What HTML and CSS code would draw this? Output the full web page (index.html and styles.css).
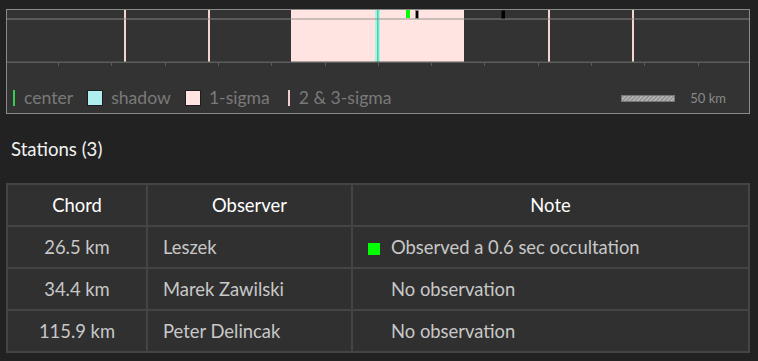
FILE: index.html
```html
<!DOCTYPE html>
<html>
<head>
<meta charset="utf-8">
<link rel="stylesheet" href="styles.css">
</head>
<body>
<div class="page">
  <div class="chart">
    <svg class="plot" width="742" height="58" viewBox="0 0 742 58">
      <defs>
        <pattern id="hatch" width="3" height="3" patternUnits="userSpaceOnUse" patternTransform="rotate(45)">
          <rect width="3" height="3" fill="#8a8a8a"/>
          <rect width="1.5" height="3" fill="#bdbdbd"/>
        </pattern>
      </defs>
      <rect x="284" y="0" width="173" height="52" fill="#ffe4e1"/>
      <rect x="368" y="0" width="5" height="52" fill="#afeeee"/>
      <rect x="370" y="0" width="1.5" height="52" fill="#3fd98f"/>
      <rect x="117" y="0" width="2" height="52" fill="#f3d4d1"/>
      <rect x="201" y="0" width="2" height="52" fill="#f3d4d1"/>
      <rect x="541" y="0" width="2" height="52" fill="#f3d4d1"/>
      <rect x="625" y="0" width="2" height="52" fill="#f3d4d1"/>
      <rect x="0" y="8" width="742" height="2" fill="rgba(140,140,140,0.45)"/>
      <rect x="399" y="0" width="4" height="8" fill="#00ff00"/>
      <rect x="408.5" y="0.5" width="3" height="8" fill="#000" stroke="#999" stroke-width="0.6"/>
      <rect x="494.5" y="0.5" width="3.5" height="8" fill="#000"/>
      <rect x="0" y="51.5" width="742" height="1.5" fill="#5c5c5c"/>
      <g stroke="#5c5c5c" stroke-width="1">
        <line x1="51.5" y1="52" x2="51.5" y2="56"/>
        <line x1="104.5" y1="52" x2="104.5" y2="56"/>
        <line x1="158.5" y1="52" x2="158.5" y2="56"/>
        <line x1="211.5" y1="52" x2="211.5" y2="56"/>
        <line x1="264.5" y1="52" x2="264.5" y2="56"/>
        <line x1="318.5" y1="52" x2="318.5" y2="56"/>
        <line x1="371.5" y1="52" x2="371.5" y2="56"/>
        <line x1="424.5" y1="52" x2="424.5" y2="56"/>
        <line x1="477.5" y1="52" x2="477.5" y2="56"/>
        <line x1="531.5" y1="52" x2="531.5" y2="56"/>
        <line x1="584.5" y1="52" x2="584.5" y2="56"/>
        <line x1="637.5" y1="52" x2="637.5" y2="56"/>
        <line x1="691.5" y1="52" x2="691.5" y2="56"/>
      </g>
    </svg>
    <div class="legend">
      <span class="item"><span class="mark-line green"></span>center</span>
      <span class="item"><span class="swatch shadow"></span>shadow</span>
      <span class="item"><span class="swatch sigma1"></span>1-sigma</span>
      <span class="item"><span class="mark-line pink"></span>2 &amp; 3-sigma</span>
      <span class="scale">
        <svg class="scalebar" width="54" height="7" viewBox="0 0 54 7"><rect x="0" y="0" width="54" height="7" fill="url(#hatch)"/><rect x="0.5" y="0.5" width="53" height="6" fill="none" stroke="#777" stroke-width="1"/></svg>
        <span class="scale-label">50 km</span>
      </span>
    </div>
  </div>

  <h3 class="title">Stations (3)</h3>

  <table class="stations">
    <thead>
      <tr><th class="c-chord">Chord</th><th class="c-obs">Observer</th><th class="c-note">Note</th></tr>
    </thead>
    <tbody>
      <tr><td class="num">26.5 km</td><td>Leszek</td><td><span class="ind ok"></span>Observed a 0.6 sec occultation</td></tr>
      <tr><td class="num">34.4 km</td><td>Marek Zawilski</td><td><span class="ind"></span>No observation</td></tr>
      <tr><td class="num">115.9 km</td><td>Peter Delincak</td><td><span class="ind"></span>No observation</td></tr>
    </tbody>
  </table>
</div>
</body>
</html>
```

FILE: styles.css
```css
html, body {
  margin: 0;
  padding: 0;
  background: #222222;
}

.page {
  padding: 9px 0 0 6px;
  font-family: Lato, "Open Sans", sans-serif;
}

.chart {
  width: 744px;
  height: 105px;
  box-sizing: border-box;
  border: 1px solid #8a8a8a;
  background: #333333;
  display: flex;
  flex-direction: column;
}

.plot {
  display: block;
}

.legend {
  display: flex;
  align-items: center;
  padding: 21px 0 0 6px;
  color: #7a7a7a;
  font-size: 17.6px;
  line-height: 18px;
}

.item {
  display: flex;
  align-items: center;
  margin-right: 10px;
}

.mark-line {
  display: inline-block;
  width: 2px;
  height: 16px;
  margin-right: 9px;
}
.mark-line.green { background: #33cc55; }
.mark-line.pink { background: #f0cfcc; margin-left: 8px; }

.swatch {
  display: inline-block;
  width: 14px;
  height: 14px;
  border: 1px solid #1e1e1e;
  margin-right: 8px;
  margin-left: 4px;
}
.swatch.shadow { background: #afeeee; }
.swatch.sigma1 { background: #ffe4e1; }

.scale {
  margin-left: auto;
  margin-right: 23px;
  display: flex;
  align-items: center;
}
.scalebar { display: block; margin-right: 15px; }
.scale-label {
  font-size: 13px;
  color: #8a8a8a;
}

.title {
  margin: 0;
  padding: 25px 0 0 5px;
  height: 44px;
  box-sizing: content-box;
  color: #f2f2f2;
  font-weight: normal;
  font-size: 18.6px;
  line-height: 20px;
}

.stations {
  margin-top: 0;
  width: 744px;
  border-collapse: collapse;
  background: #303030;
  font-size: 18.4px;
}

.stations th, .stations td {
  border: 2px solid #444444;
  height: 40px;
  padding: 0 15px;
}

.stations th {
  color: #ffffff;
  font-weight: normal;
  text-align: center;
}

.stations td {
  color: #c8c8c8;
  text-align: left;
}

.stations td.num { text-align: center; }

.c-chord { width: 108px; }
.c-obs { width: 173px; }

.ind {
  display: inline-block;
  width: 12px;
  height: 12px;
  margin-right: 11px;
  vertical-align: -1px;
}
.ind.ok { background: #00ff00; }
```
